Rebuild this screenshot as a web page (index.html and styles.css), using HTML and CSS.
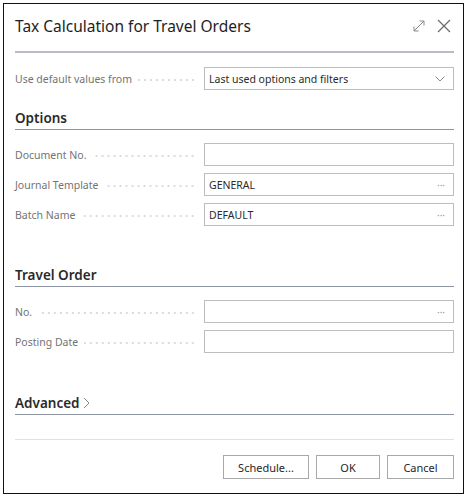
FILE: index.html
```html
<!DOCTYPE html>
<html>
<head>
  <title>Tax Calculation for Travel Orders</title>
  <link rel="stylesheet" href="styles.css">
</head>
<body>
  <div class="dialog">
    <div class="dialog-header">
      <h1 class="dialog-title">Tax Calculation for Travel Orders</h1>
      <div class="header-icons">
        <svg class="icon-expand" width="12" height="12" viewBox="0 0 12 12">
          <path d="M1 11 L11 1 M6.5 1 H11 V5.5 M1 6.5 V11 H5.5" fill="none" stroke="#8a8a8a" stroke-width="1"/>
        </svg>
        <svg class="icon-close" width="14" height="14" viewBox="0 0 14 14">
          <path d="M1 1 L13 13 M13 1 L1 13" fill="none" stroke="#6a6a6a" stroke-width="1.2"/>
        </svg>
      </div>
    </div>

    <div class="dialog-body">
      <div class="field-row first-row">
        <div class="field-label"><span>Use default values from</span><i class="dots"></i></div>
        <div class="field-input">
          <span class="value">Last used options and filters</span>
          <svg class="chevron" width="10" height="6" viewBox="0 0 10 6">
            <path d="M0.5 0.5 L5 5 L9.5 0.5" fill="none" stroke="#8a8a8a" stroke-width="1"/>
          </svg>
        </div>
      </div>

      <div class="group">
        <h2 class="group-title">Options</h2>
        <div class="field-row">
          <div class="field-label"><span>Document No.</span><i class="dots"></i></div>
          <div class="field-input"></div>
        </div>
        <div class="field-row">
          <div class="field-label"><span>Journal Template</span><i class="dots"></i></div>
          <div class="field-input"><span class="value">GENERAL</span><span class="lookup">···</span></div>
        </div>
        <div class="field-row">
          <div class="field-label"><span>Batch Name</span><i class="dots"></i></div>
          <div class="field-input"><span class="value">DEFAULT</span><span class="lookup">···</span></div>
        </div>
      </div>

      <div class="group">
        <h2 class="group-title">Travel Order</h2>
        <div class="field-row">
          <div class="field-label"><span>No.</span><i class="dots"></i></div>
          <div class="field-input"><span class="value"></span><span class="lookup">···</span></div>
        </div>
        <div class="field-row">
          <div class="field-label"><span>Posting Date</span><i class="dots"></i></div>
          <div class="field-input"></div>
        </div>
      </div>

      <div class="group advanced">
        <h2 class="group-title">Advanced<svg class="caret" width="7" height="12" viewBox="0 0 7 12"><path d="M1 1 L6 6 L1 11" fill="none" stroke="#8a8a8a" stroke-width="1"/></svg></h2>
      </div>
    </div>

    <div class="dialog-footer">
      <button class="btn">Schedule...</button>
      <button class="btn btn-ok">OK</button>
      <button class="btn">Cancel</button>
    </div>
  </div>
</body>
</html>
```

FILE: styles.css
```css
html, body {
  margin: 0;
  padding: 0;
  background: #fff;
}

body {
  font-family: "Noto Sans", "Open Sans", sans-serif;
  color: #212121;
  width: 469px;
  height: 500px;
}

.dialog {
  margin: 3px 0 0 3px;
  border: 1px solid #111;
  padding: 0 9px 0 11px;
  box-sizing: border-box;
  width: 461px;
  height: 491px;
  display: flex;
  flex-direction: column;
}

.dialog-header {
  height: 47px;
  border-bottom: 2px solid #b7bcc5;
  display: flex;
  align-items: center;
  justify-content: space-between;
}

.dialog-title {
  margin: 0 0 4px 0;
  font-size: 15.5px;
  font-weight: 400;
  color: #1e1e1e;
}

.header-icons {
  display: flex;
  align-items: center;
  gap: 12px;
  padding-right: 3px;
  margin-bottom: 4px;
}

.dialog-body {
  flex: 1;
}

.field-row {
  display: flex;
  align-items: center;
  height: 23px;
  margin-bottom: 7px;
}

.first-row {
  margin-top: 14px;
}

.field-label {
  width: 189px;
  display: flex;
  align-items: center;
  font-size: 10.5px;
  color: #737373;
  white-space: nowrap;
}

.dots {
  flex: 1;
  height: 4px;
  margin: 2px 8px 0 6px;
  background-image: radial-gradient(circle, #c8c8c8 0.6px, transparent 0.9px);
  background-size: 6px 4px;
  background-repeat: repeat-x;
  background-position: right center;
}

.field-input {
  flex: 1;
  height: 23px;
  box-sizing: border-box;
  border: 1px solid #bdbdbd;
  display: flex;
  align-items: center;
  justify-content: space-between;
  padding: 0 8px 0 4px;
  font-size: 10.5px;
  color: #2a2a2a;
}

.lookup {
  color: #9a9a9a;
  font-size: 10px;
}

.group {
  margin-top: 17px;
}

.group + .group {
  margin-top: 38px;
}

.group.advanced {
  margin-top: 39px;
}

.group-title {
  margin: 0 0 13px 0;
  font-size: 13.5px;
  font-weight: 600;
  color: #2a2a2a;
  height: 22px;
  line-height: 22px;
  border-bottom: 1px solid #8d95a3;
  display: flex;
  align-items: center;
}

.caret {
  margin-left: 3px;
}

.dialog-footer {
  border-top: 1px solid #e1e1e1;
  height: 54px;
  display: flex;
  justify-content: flex-end;
  align-items: flex-start;
  gap: 7px;
  padding-top: 15px;
  box-sizing: border-box;
}

.btn {
  font-family: "Noto Sans", "Open Sans", sans-serif;
  font-size: 11px;
  color: #262626;
  background: #fff;
  border: 1px solid #a8a8a8;
  height: 24px;
  padding: 0;
  width: 86px;
}

.btn-ok {
  width: 64px;
}

.btn:last-child {
  width: 67px;
}
```
